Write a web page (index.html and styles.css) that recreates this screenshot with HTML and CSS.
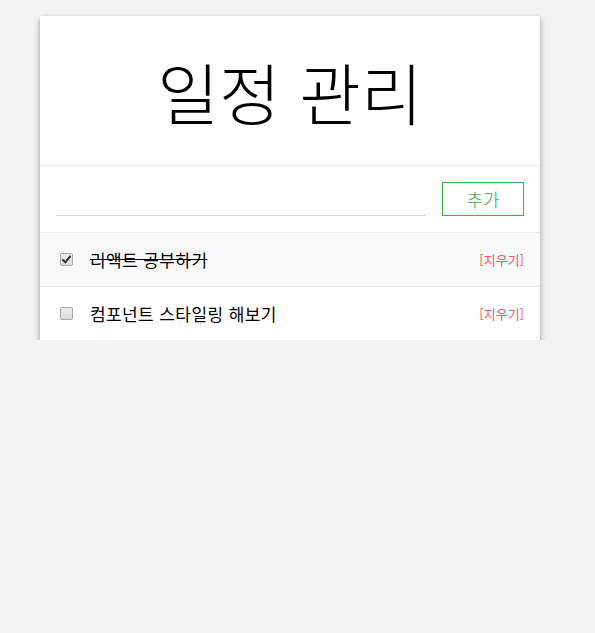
FILE: index.html
```html
<!DOCTYPE html>
<html lang="ko">
<head>
    <meta charset="UTF-8">
    <meta name="viewport" content="width=device-width, initial-scale=1.0">
    <title>일정 관리</title>
    <link rel="stylesheet" href="styles.css">
</head>
<body>
    <div class="todo-template">
        <h1 class="todo-title">일정 관리</h1>
        <form class="todo-form">
            <input type="text" class="todo-input">
            <button type="submit" class="todo-add">추가</button>
        </form>
        <ul class="todo-list">
            <li class="todo-item done">
                <input type="checkbox" class="todo-check" checked>
                <span class="todo-text">리액트 공부하기</span>
                <span class="todo-remove">[지우기]</span>
            </li>
            <li class="todo-item">
                <input type="checkbox" class="todo-check">
                <span class="todo-text">컴포넌트 스타일링 해보기</span>
                <span class="todo-remove">[지우기]</span>
            </li>
        </ul>
    </div>
</body>
</html>
```

FILE: styles.css
```css
body {
    margin: 0;
    background: #f1f2f4;
    font-family: "Noto Sans CJK KR", "Noto Sans", sans-serif;
}
.todo-template {
    width: 500px;
    margin: 16px 40px 0;
    background: #fff;
    box-shadow: 0 3px 6px rgba(0, 0, 0, 0.16), 0 3px 6px rgba(0, 0, 0, 0.23);
}
.todo-title {
    margin: 0;
    padding: 27px 0 26px;
    font-size: 67px;
    line-height: 96px;
    font-weight: 300;
    text-align: center;
    color: #000;
    border-bottom: 1px solid #e9ecef;
}
.todo-form {
    display: flex;
    gap: 16px;
    padding: 16px;
}
.todo-input {
    flex: 1;
    border: none;
    border-bottom: 1px solid #ced4da;
    outline: none;
    font-size: 16px;
    padding: 0;
}
.todo-add {
    width: 82px;
    height: 34px;
    border: 1px solid #37b24d;
    background: #fff;
    color: #40a84e;
    font-family: inherit;
    font-size: 18px;
    font-weight: 300;
    cursor: pointer;
}
.todo-list {
    list-style: none;
    margin: 0;
    padding: 0;
}
.todo-item {
    display: flex;
    align-items: center;
    padding: 16px;
    border-top: 1px solid #e9ecef;
    font-size: 17px;
    line-height: 21px;
}
.todo-item.done {
    background: #f8f9fa;
}
.todo-check {
    appearance: none;
    position: relative;
    width: 13px;
    height: 13px;
    margin: 3px 3px 3px 4px;
    border: 1px solid #a9a9a9;
    border-radius: 2px;
    background: linear-gradient(#ededed, #dcdcdc);
}
.todo-check:checked::after {
    content: "";
    position: absolute;
    left: 3px;
    top: 0px;
    width: 3px;
    height: 7px;
    border: solid #333;
    border-width: 0 2px 2px 0;
    transform: rotate(40deg);
}
.todo-text {
    flex: 1;
    margin-left: 14px;
    letter-spacing: 0.4px;
}
.done .todo-text {
    text-decoration: line-through;
}
.todo-remove {
    font-size: 13px;
    color: #f5565f;
    cursor: pointer;
}
```
